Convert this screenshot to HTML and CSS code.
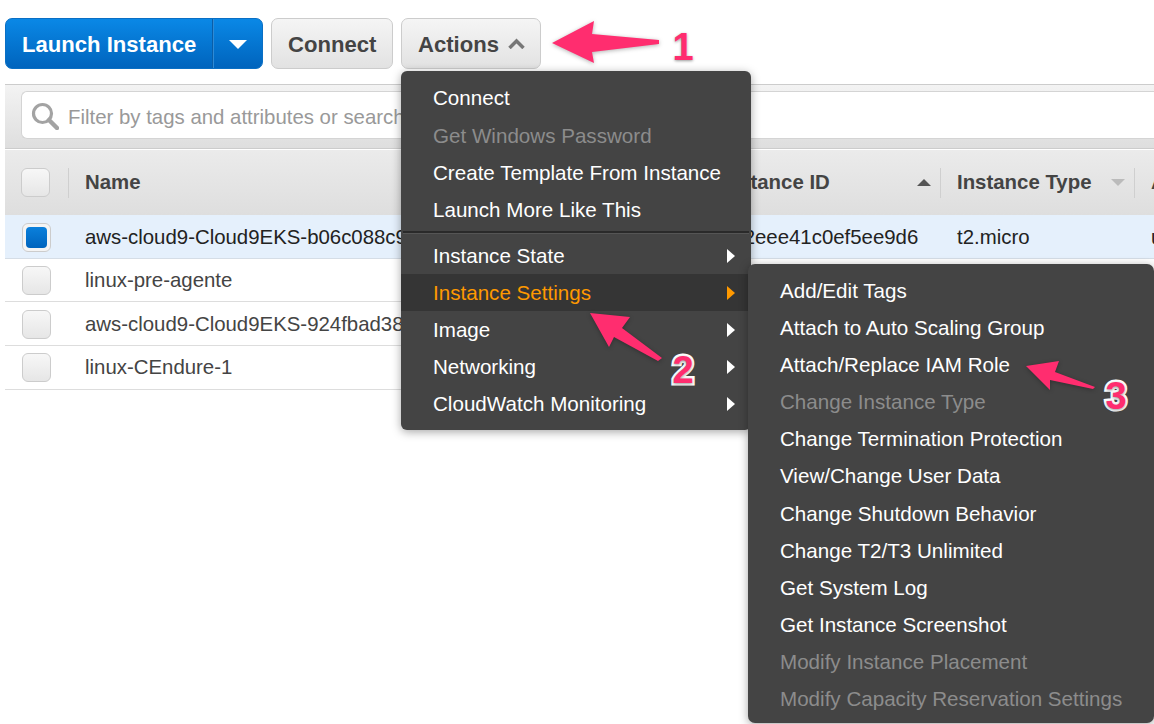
FILE: index.html
```html
<!DOCTYPE html>
<html lang="en">
<head>
<meta charset="utf-8">
<title>EC2 Instances</title>
<link rel="stylesheet" href="styles.css">
</head>
<body>
<div class="page">
  <div class="toolbar">
    <div class="btn-primary">
      <span class="btn-primary-label">Launch Instance</span>
      <span class="btn-primary-caret"><svg width="20" height="11" viewBox="0 0 20 11"><path d="M1 1h18L10 10z" fill="#fff"/></svg></span>
    </div>
    <div class="btn btn-connect">Connect</div>
    <div class="btn btn-actions">Actions
      <svg class="chev" width="17" height="11" viewBox="0 0 17 11"><path d="M1.500 10L8.500 3 15.500 10" fill="none" stroke="#777" stroke-width="3.500"/></svg>
    </div>
  </div>

  <div class="filterbar">
    <div class="filter">
      <svg class="search" width="28" height="28" viewBox="0 0 28 28"><circle cx="11.500" cy="11.500" r="9" fill="none" stroke="#a3a3a3" stroke-width="3.200"/><path d="M18 18l8 8" stroke="#a3a3a3" stroke-width="4.500" stroke-linecap="round"/></svg>
      <span class="filter-text">Filter by tags and attributes or search by keyword</span>
    </div>
  </div>

  <div class="table">
    <div class="row head">
      <div class="cell check"><span class="box"></span></div>
      <div class="cell name">Name</div>
      <div class="cell id">Instance ID<svg class="sort" width="14" height="7" viewBox="0 0 14 7"><path d="M0 7L7 0l7 7z" fill="#555"/></svg></div>
      <div class="cell type">Instance Type<svg class="sort" width="14" height="7" viewBox="0 0 14 7"><path d="M0 0l7 7 7-7z" fill="#bbb"/></svg></div>
      <div class="cell last">A</div>
    </div>
    <div class="row selected">
      <div class="cell check"><span class="box on"></span></div>
      <div class="cell name"><span class="clip">aws-cloud9-Cloud9EKS-b06c088c9a1b44e7</span></div>
      <div class="cell id">i-02eee41c0ef5ee9d6</div>
      <div class="cell type">t2.micro</div>
      <div class="cell last">us</div>
    </div>
    <div class="row short">
      <div class="cell check"><span class="box"></span></div>
      <div class="cell name">linux-pre-agente</div>
    </div>
    <div class="row">
      <div class="cell check"><span class="box"></span></div>
      <div class="cell name"><span class="clip">aws-cloud9-Cloud9EKS-924fbad38c0d41a2</span></div>
    </div>
    <div class="row final">
      <div class="cell check"><span class="box"></span></div>
      <div class="cell name">linux-CEndure-1</div>
    </div>
  </div>

  <div class="menu menu-main">
    <div class="item top">Connect</div>
    <div class="item top off">Get Windows Password</div>
    <div class="item top">Create Template From Instance</div>
    <div class="item top">Launch More Like This</div>
    <div class="divider"></div>
    <div class="item sub">Instance State<i class="tri"></i></div>
    <div class="item sub active">Instance Settings<i class="tri"></i></div>
    <div class="item sub">Image<i class="tri"></i></div>
    <div class="item sub">Networking<i class="tri"></i></div>
    <div class="item sub">CloudWatch Monitoring<i class="tri"></i></div>
  </div>

  <div class="menu menu-sub">
    <div class="item">Add/Edit Tags</div>
    <div class="item">Attach to Auto Scaling Group</div>
    <div class="item">Attach/Replace IAM Role</div>
    <div class="item off">Change Instance Type</div>
    <div class="item">Change Termination Protection</div>
    <div class="item">View/Change User Data</div>
    <div class="item">Change Shutdown Behavior</div>
    <div class="item">Change T2/T3 Unlimited</div>
    <div class="item">Get System Log</div>
    <div class="item">Get Instance Screenshot</div>
    <div class="item off">Modify Instance Placement</div>
    <div class="item off">Modify Capacity Reservation Settings</div>
  </div>

  <svg class="arrows" width="1154" height="724" viewBox="0 0 1154 724">
    <g fill="#ff2d6f">
      <path d="M552 43L594 21 592 34 659 40 659 44 592 52 594 63z"/>
      <path d="M590 313L630 317 622 328 662 358 658 361 614 337 609 347z"/>
      <path d="M1026 366L1059 361 1055 372 1095 387 1093 389 1050 380 1050 390z"/>
    </g>
  </svg>
  <span class="num num1">1</span>
  <span class="num num2">2</span>
  <span class="num num3">3</span>
</div>
</body>
</html>
```
FILE: styles.css
```css
* { box-sizing: border-box; }
html, body { margin: 0; padding: 0; background: #fff; }
body { font-family: "Liberation Sans", Arial, sans-serif; font-size: 20.4px; color: #444; }
.page { position: relative; width: 1154px; height: 724px; overflow: hidden; padding-top: 18px; }

.toolbar { display: flex; gap: 8px; padding-left: 5px; height: 51px; }
.btn-primary { display: flex; width: 258px; border: 1px solid #0a6fc4; border-radius: 7px; background: linear-gradient(#0a88e6, #0064bd); color: #fff; font-weight: bold; font-size: 22.100px; }
.btn-primary-label { display: flex; align-items: center; width: 207px; padding: 2px 0 0 16px; border-right: 1px solid #0a5ea8; }
.btn-primary-caret { flex: 1; display: flex; align-items: center; justify-content: center; border-left: 1px solid #2f8bd6; padding-top: 2px; }
.btn { display: flex; align-items: center; gap: 9px; padding: 2px 0 0 16px; border: 1px solid #ccc; border-radius: 7px; background: linear-gradient(#f5f5f5, #e2e2e2); font-weight: bold; font-size: 22.100px; color: #444; }
.btn-connect { width: 122px; }
.btn-actions { width: 140px; }
.chev { margin-top: -3px; }

.filterbar { margin: 15px 0 0 5px; height: 65px; padding: 6px 0 0 16px; background: linear-gradient(#f3f3f3, #dedede); border-top: 1px solid #ccc; border-bottom: 1px solid #ccc; }
.filter { display: flex; align-items: center; height: 48px; padding-left: 9px; gap: 9px; background: #fff; border: 1px solid #d4d4d4; border-right: 0; border-radius: 6px 0 0 6px; color: #999; white-space: nowrap; }
.search { flex: none; margin-top: 2px; }
.filter-text { display: block; width: 333px; overflow: hidden; padding-top: 5px; }

.table { margin: 0 0 0 5px; }
.row { display: grid; grid-template-columns: 63px 636px 236px 194px 1fr; align-items: center; height: 44px; padding-top: 1px; border-bottom: 1px solid #ddd; }
.row.short { height: 43px; }
.row.final { padding-top: 0; }
.row.head { height: 66px; padding-top: 0; border-top: 1px solid #fff; border-bottom: 0; font-weight: bold; background: linear-gradient(#ebebeb, #dedede); }
.row.selected { background: #e5f0fc; border-bottom-color: #d5dde6; color: #222; }
.cell { padding-left: 17px; white-space: nowrap; overflow: hidden; }
.check { display: flex; align-items: center; }
.head .cell { display: flex; align-items: center; height: 30px; }
.head .cell + .cell { padding-left: 16px; border-left: 1px solid #cfcfcf; }
.head .check { padding-left: 16px; }
.head .id, .head .type { position: relative; }
.sort { position: absolute; right: 9px; top: 11px; }
.clip { display: block; width: 316px; overflow: hidden; }
.box { display: block; width: 29px; height: 29px; border: 1px solid #ccc; border-radius: 6px; background: linear-gradient(#f7f7f7, #e6e6e6); }
.box.on { position: relative; background: #f4f4f4; }
.box.on::after { content: ""; position: absolute; inset: 3px; border-radius: 4px; background: linear-gradient(#0a80dc, #0064bd); }

.menu { position: absolute; background: #444; color: #fff; font-size: 20.600px; white-space: nowrap; box-shadow: 0 2px 10px rgba(0, 0, 0, .35); }
.menu-main { left: 401px; top: 71px; width: 350px; height: 359px; padding-top: 8.600px; border-radius: 6px; }
.menu-sub { left: 748px; top: 264px; width: 406px; height: 459px; padding-top: 7.400px; border-radius: 7px; }
.item { display: flex; align-items: center; justify-content: space-between; height: 37.100px; padding: 2px 16px 0 32px; }
.item.top { height: 37.330px; padding-top: 0; }
.item.sub { height: 37px; padding-top: 0; }
.off { color: #8c8c8c; }
.active { background: #353535; color: #f90; }
.divider { height: 3px; margin: 2.400px 2px 3px; background: #2a2a2a; border-bottom: 1px solid #555; }
.tri { width: 0; height: 0; border-left: 8px solid #fff; border-top: 7px solid transparent; border-bottom: 7px solid transparent; }
.active .tri { border-left-color: #f90; }

.arrows { position: absolute; left: 0; top: 0; filter: drop-shadow(0 1px 2px rgba(0, 0, 0, .3)); }
.num { position: absolute; width: 30px; text-align: center; font-weight: bold; font-size: 38px; line-height: 36px; color: #ff2d6f; -webkit-text-stroke: 5px #fff; paint-order: stroke fill; text-shadow: 0 1px 3px rgba(0, 0, 0, .4); }
.num1 { left: 668px; top: 29px; }
.num2 { left: 668px; top: 352px; }
.num3 { left: 1101px; top: 378px; }
```
